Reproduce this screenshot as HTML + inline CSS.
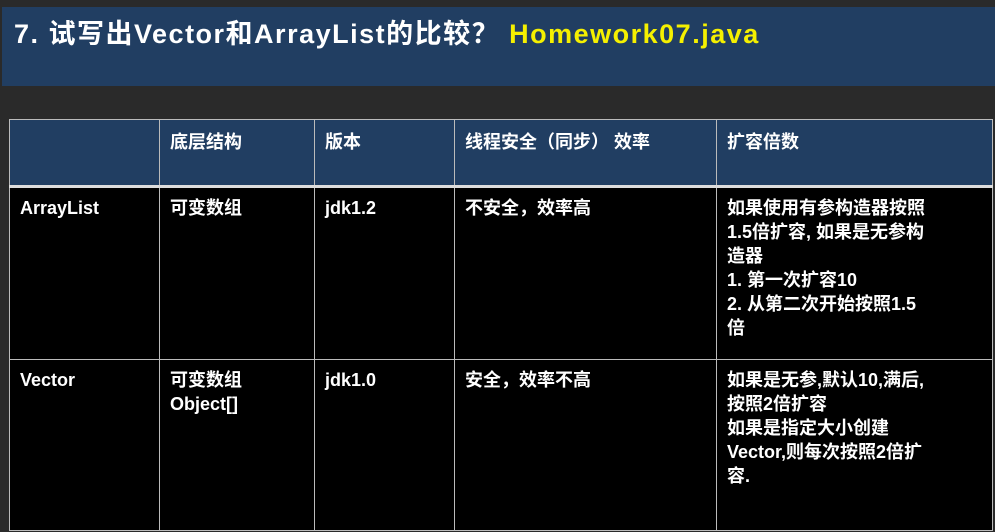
<!DOCTYPE html><html><head><meta charset="utf-8"><style>
body{margin:0;width:995px;height:532px;background:#2a2a2a;overflow:hidden;font-family:"Liberation Sans","Noto Sans CJK SC",sans-serif;font-weight:bold;color:#fff}
.banner{position:absolute;left:2px;top:7px;width:993px;height:79px;background:#213e62}
.title{position:absolute;left:14px;top:12px;font-size:27px;letter-spacing:1.5px;white-space:nowrap}
.title span{color:#f5f000}
table{position:absolute;left:9px;top:119px;width:984px;border-collapse:collapse;font-size:18px}
td{border:1px solid #bbb;vertical-align:top;padding:8px 10px 0 10px;line-height:24px}
tr.h td{background:#213e62;height:55px;padding-top:10px;border-bottom:3px solid #ddd}
tr.r1 td{background:#000;height:163px}
tr.r2 td{background:#000;height:162px}
</style></head><body>
<div class="banner"></div>
<div class="title">7. 试写出Vector和ArrayList的比较？ <span>Homework07.java</span></div>
<table>
<colgroup><col style="width:150px"><col style="width:155px"><col style="width:140px"><col style="width:262px"><col></colgroup>
<tr class="h"><td></td><td>底层结构</td><td>版本</td><td>线程安全（同步） 效率</td><td>扩容倍数</td></tr>
<tr class="r1"><td>ArrayList</td><td>可变数组</td><td>jdk1.2</td><td>不安全，效率高</td><td>如果使用有参构造器按照<br>1.5倍扩容, 如果是无参构<br>造器<br>1. 第一次扩容10<br>2. 从第二次开始按照1.5<br>倍</td></tr>
<tr class="r2"><td>Vector</td><td>可变数组<br>Object[]</td><td>jdk1.0</td><td>安全，效率不高</td><td>如果是无参,默认10,满后,<br>按照2倍扩容<br>如果是指定大小创建<br>Vector,则每次按照2倍扩<br>容.</td></tr>
</table>
</body></html>
